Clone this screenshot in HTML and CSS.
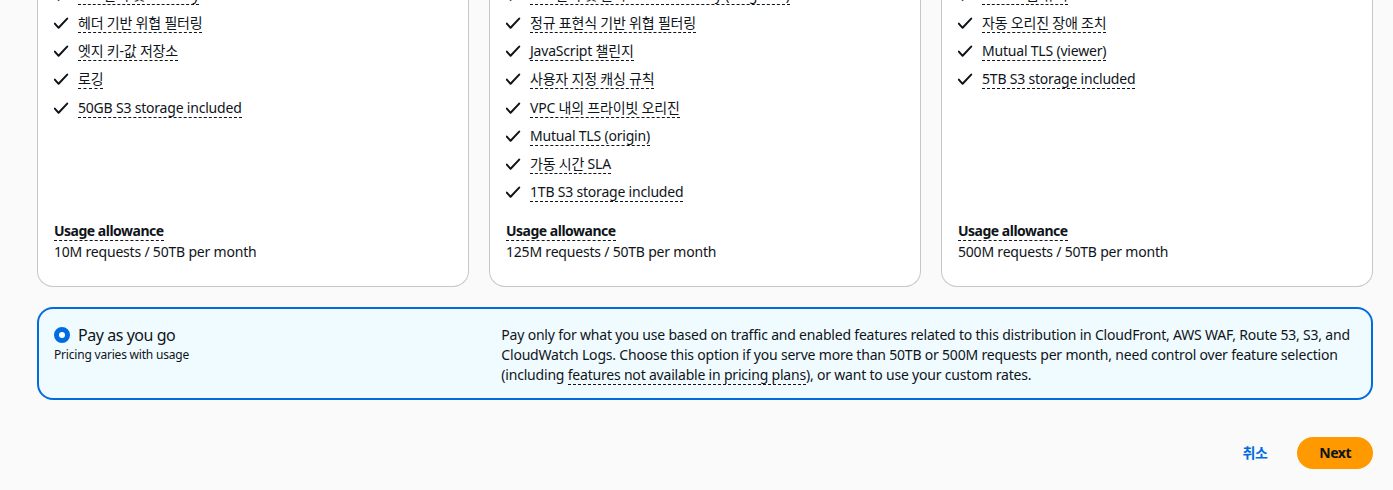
FILE: index.html
```html
<!DOCTYPE html>
<html lang="ko">
<head>
<meta charset="utf-8">
<title>Pricing plans</title>
<link rel="stylesheet" href="styles.css">
</head>
<body>
<main class="page">
  <section class="plans">
    <article class="card">
      <ul class="features">
        <li><svg class="check" width="16" height="16" viewBox="0 0 16 16"><path d="M0.8 7.6 L4.6 11.8 L13.2 2.6"/></svg><span class="text"><span class="term">Bot 관리 및 Security</span></span></li>
        <li><svg class="check" width="16" height="16" viewBox="0 0 16 16"><path d="M0.8 7.6 L4.6 11.8 L13.2 2.6"/></svg><span class="text"><span class="term">헤더 기반 위협 필터링</span></span></li>
        <li><svg class="check" width="16" height="16" viewBox="0 0 16 16"><path d="M0.8 7.6 L4.6 11.8 L13.2 2.6"/></svg><span class="text"><span class="term">엣지 키-값 저장소</span></span></li>
        <li><svg class="check" width="16" height="16" viewBox="0 0 16 16"><path d="M0.8 7.6 L4.6 11.8 L13.2 2.6"/></svg><span class="text"><span class="term">로깅</span></span></li>
        <li><svg class="check" width="16" height="16" viewBox="0 0 16 16"><path d="M0.8 7.6 L4.6 11.8 L13.2 2.6"/></svg><span class="text"><span class="term">50GB S3 storage included</span></span></li>
      </ul>
      <div class="usage">
        <div class="usage-label"><span class="term">Usage allowance</span></div>
        <div class="usage-value">10M requests / 50TB per month</div>
      </div>
    </article>
    <article class="card">
      <ul class="features">
        <li><svg class="check" width="16" height="16" viewBox="0 0 16 16"><path d="M0.8 7.6 L4.6 11.8 L13.2 2.6"/></svg><span class="text"><span class="term">Bot 관리 및 분석 with Discovery (Targeted)</span></span></li>
        <li><svg class="check" width="16" height="16" viewBox="0 0 16 16"><path d="M0.8 7.6 L4.6 11.8 L13.2 2.6"/></svg><span class="text"><span class="term">정규 표현식 기반 위협 필터링</span></span></li>
        <li><svg class="check" width="16" height="16" viewBox="0 0 16 16"><path d="M0.8 7.6 L4.6 11.8 L13.2 2.6"/></svg><span class="text"><span class="term">JavaScript 챌린지</span></span></li>
        <li><svg class="check" width="16" height="16" viewBox="0 0 16 16"><path d="M0.8 7.6 L4.6 11.8 L13.2 2.6"/></svg><span class="text"><span class="term">사용자 지정 캐싱 규칙</span></span></li>
        <li><svg class="check" width="16" height="16" viewBox="0 0 16 16"><path d="M0.8 7.6 L4.6 11.8 L13.2 2.6"/></svg><span class="text"><span class="term">VPC 내의 프라이빗 오리진</span></span></li>
        <li><svg class="check" width="16" height="16" viewBox="0 0 16 16"><path d="M0.8 7.6 L4.6 11.8 L13.2 2.6"/></svg><span class="text"><span class="term">Mutual TLS (origin)</span></span></li>
        <li><svg class="check" width="16" height="16" viewBox="0 0 16 16"><path d="M0.8 7.6 L4.6 11.8 L13.2 2.6"/></svg><span class="text"><span class="term">가동 시간 SLA</span></span></li>
        <li><svg class="check" width="16" height="16" viewBox="0 0 16 16"><path d="M0.8 7.6 L4.6 11.8 L13.2 2.6"/></svg><span class="text"><span class="term">1TB S3 storage included</span></span></li>
      </ul>
      <div class="usage">
        <div class="usage-label"><span class="term">Usage allowance</span></div>
        <div class="usage-value">125M requests / 50TB per month</div>
      </div>
    </article>
    <article class="card">
      <ul class="features">
        <li><svg class="check" width="16" height="16" viewBox="0 0 16 16"><path d="M0.8 7.6 L4.6 11.8 L13.2 2.6"/></svg><span class="text"><span class="term">WAF 고급 규칙</span></span></li>
        <li><svg class="check" width="16" height="16" viewBox="0 0 16 16"><path d="M0.8 7.6 L4.6 11.8 L13.2 2.6"/></svg><span class="text"><span class="term">자동 오리진 장애 조치</span></span></li>
        <li><svg class="check" width="16" height="16" viewBox="0 0 16 16"><path d="M0.8 7.6 L4.6 11.8 L13.2 2.6"/></svg><span class="text"><span class="term">Mutual TLS (viewer)</span></span></li>
        <li><svg class="check" width="16" height="16" viewBox="0 0 16 16"><path d="M0.8 7.6 L4.6 11.8 L13.2 2.6"/></svg><span class="text"><span class="term">5TB S3 storage included</span></span></li>
      </ul>
      <div class="usage">
        <div class="usage-label"><span class="term">Usage allowance</span></div>
        <div class="usage-value">500M requests / 50TB per month</div>
      </div>
    </article>
  </section>

  <section class="payg">
    <div class="payg-left">
      <div class="payg-title">
        <svg class="radio" width="16" height="16" viewBox="0 0 16 16"><circle cx="8" cy="8" r="5.5" fill="#ffffff" stroke="#006ce0" stroke-width="5"/></svg>
        <span>Pay as you go</span>
      </div>
      <div class="payg-sub">Pricing varies with usage</div>
    </div>
    <p class="payg-desc">Pay only for what you use based on traffic and enabled features related to this distribution in CloudFront, AWS WAF, Route 53, S3, and CloudWatch Logs. Choose this option if you serve more than 50TB or 500M requests per month, need control over feature selection (including <span class="term">features not available in pricing plans</span>), or want to use your custom rates.</p>
  </section>

  <footer class="actions">
    <button class="btn-link" type="button">취소</button>
    <button class="btn-primary" type="button">Next</button>
  </footer>
</main>
</body>
</html>
```

FILE: styles.css
```css
* { box-sizing: border-box; }

html, body {
  margin: 0;
  padding: 0;
  background: #fafafa;
  overflow: hidden;
}

body {
  font-family: "Noto Sans", "Noto Sans CJK KR", sans-serif;
  font-size: 14px;
  line-height: 20px;
  letter-spacing: -0.2px;
  color: #0f141a;
}

.page {
  padding: 0 20px 0 37px;
}

.plans {
  display: grid;
  grid-template-columns: repeat(3, 1fr);
  gap: 20px;
  margin-top: -20px;
}

.card {
  background: #ffffff;
  border: 1px solid #c6c6cd;
  border-top-color: transparent;
  border-radius: 0 0 16px 16px;
  padding: 0 16px 24px 16px;
  display: flex;
  flex-direction: column;
}

.features {
  list-style: none;
  margin: 0;
  padding: 0;
}

.features li {
  display: flex;
  align-items: flex-start;
  gap: 8px;
  height: 28.17px;
  padding-top: 4px;
}

.check {
  flex: none;
  display: block;
  margin-top: 3px;
  fill: none;
  stroke: #0f141a;
  stroke-width: 2;
  stroke-linecap: round;
  stroke-linejoin: round;
}

.text {
  display: block;
  line-height: 20px;
}

.term {
  border-bottom: 1px dashed #0f141a;
}

.usage {
  margin-top: auto;
  padding-top: 15px;
}

.usage-label {
  font-weight: 700;
  letter-spacing: -0.5px;
  line-height: 20px;
}

.usage-value {
  line-height: 20px;
  margin-top: 1px;
}

.payg {
  margin-top: 20px;
  border: 2px solid #006ce0;
  border-radius: 16px;
  background: #f0fbff;
  padding: 16px 15px 13px 15px;
  display: grid;
  grid-template-columns: 1fr 2fr;
  gap: 20px;
}

.payg-title {
  display: flex;
  align-items: center;
  gap: 8px;
  font-size: 16px;
  line-height: 20px;
  letter-spacing: -0.45px;
}

.radio {
  flex: none;
  display: block;
}

.payg-sub {
  font-size: 12px;
  line-height: 16px;
  margin-top: 2px;
}

.payg-desc {
  margin: 0;
  line-height: 20px;
}

.actions {
  display: flex;
  justify-content: flex-end;
  align-items: center;
  gap: 30px;
  margin-top: 37px;
}

.btn-link {
  background: none;
  border: none;
  padding: 4px 0;
  font-family: inherit;
  font-size: 14px;
  font-weight: 700;
  letter-spacing: -0.5px;
  line-height: 20px;
  color: #006ce0;
  cursor: pointer;
}

.btn-primary {
  background: #ff9900;
  border: 2px solid #ff9900;
  border-radius: 20px;
  padding: 4px 20px;
  font-family: inherit;
  font-size: 14px;
  font-weight: 700;
  letter-spacing: -0.5px;
  line-height: 20px;
  color: #0f141a;
  cursor: pointer;
}
```
